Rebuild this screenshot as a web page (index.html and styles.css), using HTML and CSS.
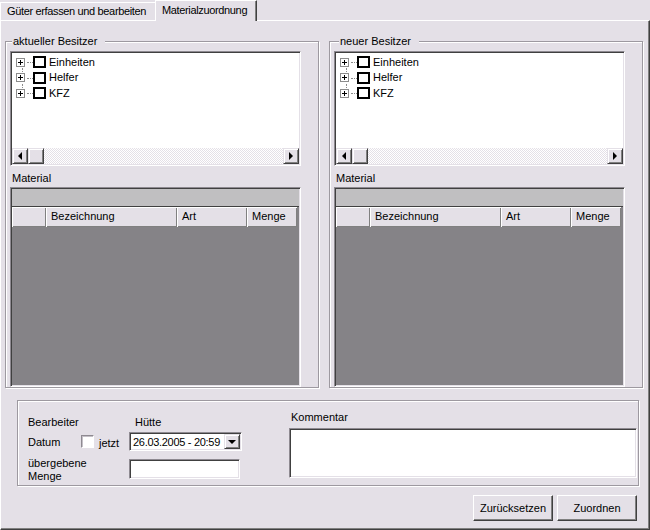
FILE: index.html
```html
<!DOCTYPE html>
<html lang="de">
<head>
<meta charset="utf-8">
<title>Materialzuordnung</title>
<link rel="stylesheet" href="styles.css">
</head>
<body>
<div class="window">
  <div class="tabs">
    <div class="tab first">Güter erfassen und bearbeiten</div>
    <div class="tab active">Materialzuordnung</div>
  </div>
  <div class="page">
    <div class="groups">
      <div class="group">
        <span class="legend">aktueller Besitzer</span>
        <div class="tree sunken">
          <div class="tree-rows">
            <div class="node"><span class="expander top"></span><span class="check"></span><span class="node-label">Einheiten</span></div>
            <div class="node"><span class="expander mid"></span><span class="check"></span><span class="node-label">Helfer</span></div>
            <div class="node"><span class="expander"></span><span class="check"></span><span class="node-label">KFZ</span></div>
          </div>
          <div class="hscroll">
            <span class="sbtn"><i class="arrow-left"></i></span>
            <span class="sbtn"></span>
            <span class="track"></span>
            <span class="sbtn"><i class="arrow-right"></i></span>
          </div>
        </div>
        <div class="section-label">Material</div>
        <div class="grid sunken">
          <div class="grid-caption"></div>
          <div class="grid-header">
            <span class="hcell c-row"></span>
            <span class="hcell c-bez">Bezeichnung</span>
            <span class="hcell c-art">Art</span>
            <span class="hcell c-menge">Menge</span>
          </div>
          <div class="grid-body"></div>
        </div>
      </div>
      <div class="group group-right">
        <span class="legend">neuer Besitzer</span>
        <div class="tree sunken">
          <div class="tree-rows">
            <div class="node"><span class="expander top"></span><span class="check"></span><span class="node-label">Einheiten</span></div>
            <div class="node"><span class="expander mid"></span><span class="check"></span><span class="node-label">Helfer</span></div>
            <div class="node"><span class="expander"></span><span class="check"></span><span class="node-label">KFZ</span></div>
          </div>
          <div class="hscroll">
            <span class="sbtn"><i class="arrow-left"></i></span>
            <span class="sbtn"></span>
            <span class="track"></span>
            <span class="sbtn"><i class="arrow-right"></i></span>
          </div>
        </div>
        <div class="section-label">Material</div>
        <div class="grid sunken">
          <div class="grid-caption"></div>
          <div class="grid-header">
            <span class="hcell c-row"></span>
            <span class="hcell c-bez">Bezeichnung</span>
            <span class="hcell c-art">Art</span>
            <span class="hcell c-menge">Menge</span>
          </div>
          <div class="grid-body"></div>
        </div>
      </div>
    </div>

    <div class="details">
      <div class="form">
        <div class="row1">
          <span class="w-bearbeiter">Bearbeiter</span>
          <span>Hütte</span>
        </div>
        <div class="row2">
          <span class="w-datum">Datum</span>
          <span class="cbox"></span>
          <span class="w-jetzt">jetzt</span>
          <div class="combo sunken">
            <span class="combo-text">26.03.2005 - 20:59</span>
            <span class="sbtn combo-btn"><i class="arrow-down"></i></span>
          </div>
        </div>
        <div class="row3">
          <span class="w-menge">übergebene<br>Menge</span>
          <div class="textbox sunken"></div>
        </div>
      </div>
      <div class="comment">
        <div class="comment-label">Kommentar</div>
        <div class="memo sunken"></div>
      </div>
    </div>

    <div class="actions">
      <button class="btn" type="button">Zurücksetzen</button>
      <button class="btn" type="button">Zuordnen</button>
    </div>
  </div>
</div>
</body>
</html>
```
FILE: styles.css
```css
body {
  margin: 0;
  background: #e4e0e7;
  font: 11px "Liberation Sans", Arial, sans-serif;
  color: #000;
}

.window {
  width: 650px;
  height: 530px;
  overflow: hidden;
}

/* Tabs */
.tabs {
  display: flex;
  align-items: flex-end;
  height: 20px;
  position: relative;
  z-index: 1;
}

.tab {
  box-sizing: border-box;
  height: 18px;
  line-height: 17px;
  border-top: 1px solid #fff;
  border-left: 1px solid #fff;
  border-right: 1px solid #404040;
  box-shadow: inset -1px 0 #808080;
  background: #e4e0e7;
  white-space: nowrap;
  letter-spacing: -0.35px;
}

.tab.first {
  width: 157px;
  padding-left: 6px;
}

.tab.active {
  width: 102px;
  height: 21px;
  margin-left: -2px;
  margin-bottom: -1px;
  padding-left: 6px;
  line-height: 18px;
  position: relative;
}

/* Page */
.page {
  box-sizing: border-box;
  height: 510px;
  border-top: 1px solid #fff;
  border-left: 1px solid #fff;
  border-right: 1px solid #404040;
  border-bottom: 1px solid #404040;
  box-shadow: inset -1px -1px #808080;
}

.groups {
  display: flex;
  gap: 10px;
  margin: 20px 0 0 4px;
}

.group {
  position: relative;
  box-sizing: border-box;
  width: 314px;
  height: 347px;
  border: 1px solid #9d99a0;
  box-shadow: inset 1px 1px #fff, 1px 1px #fff;
  padding: 9px 0 0 4px;
  display: flex;
  flex-direction: column;
}

.legend {
  position: absolute;
  top: -8px;
  left: 6px;
  padding: 0 8px 0 1px;
  line-height: 14px;
  background: #e4e0e7;
}

.group-right .legend {
  left: 9px;
}

.sunken {
  box-sizing: border-box;
  border: 1px solid;
  border-color: #8e8a91 #fff #fff #8e8a91;
  box-shadow: inset 1px 1px #404040, inset -1px -1px #e4e0e7;
  background: #fff;
  padding: 1px;
}

/* Tree view */
.tree {
  width: 291px;
  height: 115px;
  display: flex;
  flex-direction: column;
}

.tree-rows {
  flex: 1;
  padding-top: 1.5px;
}

.node {
  display: flex;
  align-items: center;
  height: 15.5px;
}

.expander {
  position: relative;
  box-sizing: border-box;
  width: 9px;
  height: 9px;
  margin-left: 4px;
  border: 1px solid #8c8c8c;
  background: #fff;
}

.expander::before {
  content: "";
  position: absolute;
  left: 1px;
  top: 3px;
  width: 5px;
  height: 1px;
  background: #000;
}

.expander::after {
  content: "";
  position: absolute;
  left: 3px;
  top: 1px;
  width: 1px;
  height: 5px;
  background: #000;
}

.node .expander + .check {
  position: relative;
}

.check::before {
  content: "";
  position: absolute;
  left: -8px;
  top: 4px;
  width: 6px;
  border-top: 1px dotted #8c8c8c;
}

.tree-rows .node:not(:last-child) .check::after {
  content: "";
  position: absolute;
  left: -13px;
  top: 10px;
  height: 6px;
  border-left: 1px dotted #8c8c8c;
}

.check {
  box-sizing: border-box;
  width: 13px;
  height: 12px;
  margin-left: 8px;
  border: 2px solid #000;
  background: #fff;
}

.node-label {
  margin-left: 3px;
  line-height: 13px;
}

/* Scroll bar */
.hscroll {
  display: flex;
  height: 16px;
}

.sbtn {
  box-sizing: border-box;
  width: 16px;
  height: 16px;
  border: 1px solid;
  border-color: #e4e0e7 #404040 #404040 #e4e0e7;
  box-shadow: inset 1px 1px #fff, inset -1px -1px #808080;
  background: #e4e0e7;
  display: flex;
  align-items: center;
  justify-content: center;
  flex: none;
}

.track {
  flex: 1;
  background: repeating-conic-gradient(#fff 0 25%, #e4e0e7 0 50%) 0 0 / 2px 2px;
}

.arrow-left {
  width: 0;
  height: 0;
  border-top: 4px solid transparent;
  border-bottom: 4px solid transparent;
  border-right: 4px solid #000;
  margin-left: -1px;
}

.arrow-right {
  width: 0;
  height: 0;
  border-top: 4px solid transparent;
  border-bottom: 4px solid transparent;
  border-left: 4px solid #000;
}

.arrow-down {
  width: 0;
  height: 0;
  border-left: 4px solid transparent;
  border-right: 4px solid transparent;
  border-top: 4px solid #000;
  margin-top: 1px;
}

/* Material grid */
.section-label {
  margin-top: 6px;
  line-height: 13px;
  padding-left: 2px;
}

.grid {
  width: 291px;
  flex: 1;
  margin-top: 2px;
  display: flex;
  flex-direction: column;
  background: #858387;
}

.grid-caption {
  height: 17px;
  background: #c0bfc1;
}

.grid-header {
  display: flex;
  border-top: 1px solid #404040;
}

.hcell {
  box-sizing: border-box;
  height: 20px;
  line-height: 19px;
  padding-left: 5px;
  background: #e4e0e7;
  box-shadow: inset 1px 1px #fff, inset -1px -1px #808080;
  white-space: nowrap;
}

.c-row { width: 34px; }
.c-bez { width: 131px; }
.c-art { width: 70px; }
.c-menge { width: 50px; }

.grid-body {
  flex: 1;
}

/* Details */
.details {
  box-sizing: border-box;
  width: 622px;
  height: 86px;
  margin: 12px 0 0 16px;
  border: 1px solid #9d99a0;
  box-shadow: inset 1px 1px #fff, 1px 1px #fff;
  display: flex;
}

.form {
  box-sizing: border-box;
  width: 271px;
  padding: 15px 0 0 10px;
}

.row1 {
  display: flex;
  line-height: 13px;
}

.w-bearbeiter { width: 107px; }

.row2 {
  display: flex;
  align-items: center;
  height: 19px;
  margin-top: 3px;
}

.w-datum { width: 53px; }

.cbox {
  box-sizing: border-box;
  width: 13px;
  height: 13px;
  border: 1px solid;
  border-color: #8e8a91 #fff #fff #8e8a91;
  box-shadow: inset 1px 1px #c4c0c7;
  background: #fff;
}

.w-jetzt {
  width: 30px;
  margin-left: 5px;
  padding-top: 2px;
}

.combo {
  width: 113px;
  height: 19px;
  display: flex;
  align-items: center;
}

.combo-text {
  flex: 1;
  padding-left: 2px;
  white-space: nowrap;
  letter-spacing: -0.3px;
}

.combo-btn {
  height: 15px;
}

.row3 {
  display: flex;
  margin-top: 6px;
}

.w-menge {
  width: 101px;
  line-height: 13px;
}

.textbox {
  width: 111px;
  height: 20px;
  margin-top: 2px;
}

.comment {
  padding-top: 10px;
}

.comment-label {
  line-height: 13px;
  padding-left: 2px;
}

.memo {
  width: 348px;
  height: 50px;
  margin-top: 4px;
}

/* Buttons */
.actions {
  display: flex;
  justify-content: flex-end;
  gap: 4px;
  margin: 9px 12px 0 0;
}

.btn {
  box-sizing: border-box;
  width: 80px;
  height: 26px;
  padding: 0;
  border: 1px solid;
  border-color: #fff #404040 #404040 #fff;
  box-shadow: inset -1px -1px #808080;
  background: #e4e0e7;
  font: 11px "Liberation Sans", Arial, sans-serif;
  color: #000;
}
```
